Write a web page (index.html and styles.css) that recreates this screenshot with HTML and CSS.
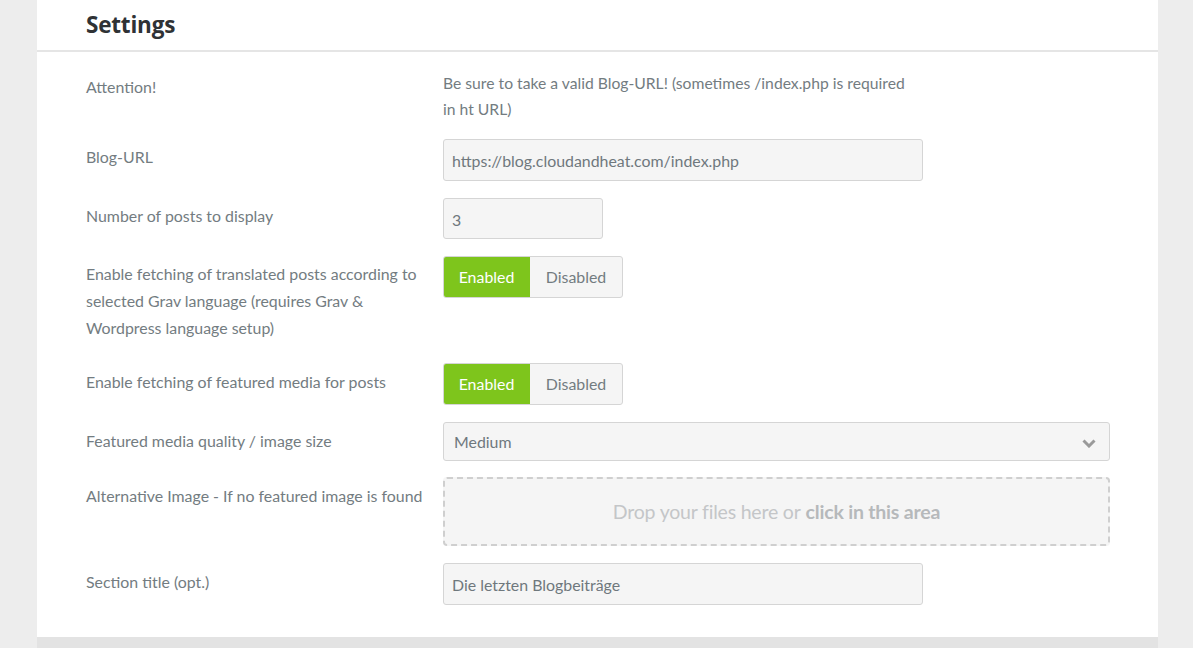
FILE: index.html
```html
<!DOCTYPE html>
<html>
<head>
<meta charset="utf-8">
<link rel="stylesheet" href="styles.css">
</head>
<body>
<div class="page">
  <div class="card">
    <div class="card-header"><h1 class="title">Settings</h1></div>
    <div class="form">
      <div class="row row-first">
        <div class="label label-top">Attention!</div>
        <div class="field note">Be sure to take a valid Blog-URL! (sometimes /index.php is required in ht URL)</div>
      </div>
      <div class="row">
        <div class="label">Blog-URL</div>
        <div class="field"><div class="input input-wide">https://blog.cloudandheat.com/index.php</div></div>
      </div>
      <div class="row">
        <div class="label">Number of posts to display</div>
        <div class="field"><div class="input input-small">3</div></div>
      </div>
      <div class="row">
        <div class="label label-multi">Enable fetching of translated posts according to selected Grav language (requires Grav &amp; Wordpress language setup)</div>
        <div class="field">
          <div class="toggle"><span class="opt on">Enabled</span><span class="opt off">Disabled</span></div>
        </div>
      </div>
      <div class="row row-gap2">
        <div class="label label-low">Enable fetching of featured media for posts</div>
        <div class="field">
          <div class="toggle"><span class="opt on">Enabled</span><span class="opt off">Disabled</span></div>
        </div>
      </div>
      <div class="row">
        <div class="label label-low">Featured media quality / image size</div>
        <div class="field">
          <div class="select"><span>Medium</span>
            <svg class="chev" width="14" height="10" viewBox="0 0 14 10"><path d="M1.5 2.5 L7 8 L12.5 2.5" fill="none" stroke="#9a9a9a" stroke-width="3" stroke-linecap="butt"/></svg>
          </div>
        </div>
      </div>
      <div class="row row-tight">
        <div class="label label-low">Alternative Image - If no featured image is found</div>
        <div class="field"><div class="dropzone">Drop your files here or <b>click in this area</b></div></div>
      </div>
      <div class="row">
        <div class="label label-low">Section title (opt.)</div>
        <div class="field"><div class="input input-wide">Die letzten Blogbeiträge</div></div>
      </div>
    </div>
  </div>
  <div class="next-card"></div>
</div>
</body>
</html>
```
FILE: styles.css
```css
html, body {
  margin: 0;
  padding: 0;
  background: #ededed;
  font-family: "Lato", "Liberation Sans", sans-serif;
  font-size: 15.9px;
  color: #737c81;
}
.page {
  width: 1121px;
  margin-left: 37px;
  height: 648px;
  overflow: hidden;
}
.card {
  background: #fff;
  box-shadow: 0 0 3px rgba(0,0,0,0.08);
  padding-bottom: 32px;
}
.card-header {
  height: 50px;
  border-bottom: 2px solid #e5e5e5;
  display: flex;
  align-items: center;
  padding-left: 49px;
}
.title {
  margin: 0;
  font-family: "Open Sans", "Liberation Sans", sans-serif;
  font-weight: 700;
  font-size: 22.5px;
  letter-spacing: -0.2px;
  color: #2f3235;
  position: relative;
  top: -1px;
}
.form {
  padding-left: 49px;
  padding-top: 18px;
}
.row {
  display: grid;
  grid-template-columns: 357px 1fr;
  margin-top: 17px;
}
.row-first { margin-top: 0; }
.row-gap2 { margin-top: 22px; }
.row-tight { margin-top: 16px; }
.label {
  line-height: 26px;
  padding-top: 5px;
  padding-right: 8px;
}
.label-top { padding-top: 4px; }
.label-multi {
  line-height: 27px;
  padding-top: 4px;
}
.label-low { padding-top: 6px; }
.note {
  line-height: 26px;
  width: 472px;
  font-size: 15.7px;
}
.input {
  box-sizing: border-box;
  height: 42px;
  border: 1px solid #d5d5d5;
  border-radius: 3px;
  background: #f5f5f5;
  padding: 0 8px;
  display: flex;
  align-items: center;
  color: #6f787d;
}
.input-wide { width: 480px; }
.input-small { width: 160px; height: 41px; padding-top: 2px; }
.toggle {
  display: inline-flex;
  box-sizing: border-box;
  height: 42px;
  border: 1px solid #d5d5d5;
  border-radius: 3px;
  overflow: hidden;
  background: #f5f5f5;
}
.opt {
  display: flex;
  align-items: center;
  justify-content: center;
  padding-bottom: 1px;
}
.opt.on {
  width: 87px;
  margin: -1px 0 -1px -1px;
  background: #7ec51c;
  color: #fff;
  border-radius: 3px 0 0 3px;
}
.opt.off {
  width: 92px;
  color: #737c81;
}
.select {
  box-sizing: border-box;
  width: 667px;
  height: 39px;
  border: 1px solid #d5d5d5;
  border-radius: 3px;
  background: #f5f5f5;
  display: flex;
  align-items: center;
  justify-content: space-between;
  padding: 0 13px 0 10px;
  color: #6f787d;
}
.chev { margin-top: 2px; }
.dropzone {
  box-sizing: border-box;
  width: 667px;
  height: 69px;
  border: 2px dashed #cfcfcf;
  border-radius: 4px;
  background: #f5f5f5;
  display: flex;
  align-items: center;
  justify-content: center;
  font-size: 19.5px;
  color: #c4c6c8;
  letter-spacing: -0.2px;
}
.dropzone b {
  font-weight: 700;
  color: #b6b9bb;
  margin-left: 5px;
}
.next-card {
  height: 20px;
  background: #e3e3e3;
}
```
